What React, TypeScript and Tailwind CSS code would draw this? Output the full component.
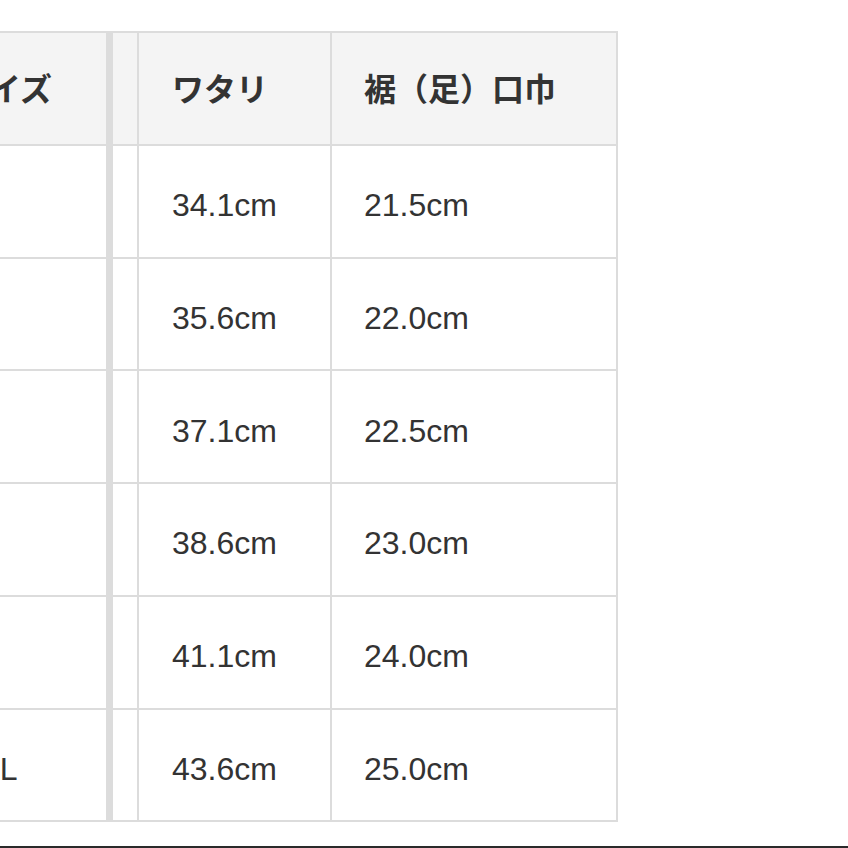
import React from "react";

const rows: [string, string, string][] = [
  ["XS", "34.1cm", "21.5cm"],
  ["S", "35.6cm", "22.0cm"],
  ["M", "37.1cm", "22.5cm"],
  ["L", "38.6cm", "23.0cm"],
  ["XL", "41.1cm", "24.0cm"],
  ["XXL", "43.6cm", "25.0cm"],
];

function Row({ cells, header }: { cells: [string, string, string]; header?: boolean }) {
  const bg = header ? "bg-[#f4f4f4]" : "bg-white";
  const txt = header ? "font-bold pt-[4px]" : "font-normal pt-[8px]";
  return (
    <div className={`flex h-[112.75px] border-b-2 border-[#dcdcdc]`}>
      <div className={`w-[183px] flex items-center pl-[34px] ${bg} ${txt}`}>
        <span className="whitespace-nowrap">{cells[0]}</span>
      </div>
      <div className="w-[7px] bg-[#dcdcdc]" />
      <div className={`w-[26px] border-r-2 border-[#dcdcdc] ${bg}`} />
      <div className={`w-[193px] flex items-center pl-[33px] border-r-2 border-[#dcdcdc] ${bg} ${txt}`}>
        <span className="whitespace-nowrap">{cells[1]}</span>
      </div>
      <div className={`w-[286px] flex items-center pl-[32px] border-r-2 border-[#dcdcdc] ${bg} ${txt}`}>
        <span className="whitespace-nowrap">{cells[2]}</span>
      </div>
    </div>
  );
}

export default function App() {
  return (
    <div
      className="w-[848px] h-[848px] bg-white overflow-hidden flex flex-col text-[#333333] text-[32px]"
      style={{ fontFamily: '"Liberation Sans", "Noto Sans CJK JP", sans-serif' }}
    >
      <div className="flex-1 pt-[31px] overflow-hidden">
        <div className="ml-[-77px] w-[695px] border-t-2 border-[#dcdcdc]">
          <Row header cells={["サイズ", "ワタリ", "裾（足）口巾"]} />
          {rows.map((r) => (
            <Row key={r[0]} cells={r} />
          ))}
        </div>
      </div>
      <div className="h-[2px] bg-[#2a2a2a]" />
    </div>
  );
}
